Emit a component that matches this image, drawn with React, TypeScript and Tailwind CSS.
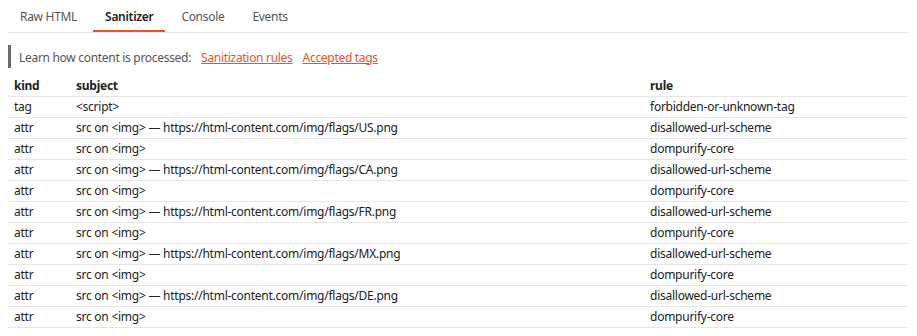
import React from "react";

const rows: [string, string, string][] = [
  ["tag", "<script>", "forbidden-or-unknown-tag"],
  ["attr", "src on <img> — https://html-content.com/img/flags/US.png", "disallowed-url-scheme"],
  ["attr", "src on <img>", "dompurify-core"],
  ["attr", "src on <img> — https://html-content.com/img/flags/CA.png", "disallowed-url-scheme"],
  ["attr", "src on <img>", "dompurify-core"],
  ["attr", "src on <img> — https://html-content.com/img/flags/FR.png", "disallowed-url-scheme"],
  ["attr", "src on <img>", "dompurify-core"],
  ["attr", "src on <img> — https://html-content.com/img/flags/MX.png", "disallowed-url-scheme"],
  ["attr", "src on <img>", "dompurify-core"],
  ["attr", "src on <img> — https://html-content.com/img/flags/DE.png", "disallowed-url-scheme"],
  ["attr", "src on <img>", "dompurify-core"],
];

export default function App() {
  const tabs = ["Raw HTML", "Sanitizer", "Console", "Events"];
  return (
    <div className="w-[917px] h-[336px] bg-white overflow-hidden px-2 text-[12px] text-[#222]" style={{ fontFamily: '"Noto Sans", sans-serif' }}>
      <div className="flex gap-1 border-b border-[#e6e6e6] h-[33px] tracking-[-0.3px]">
        {tabs.map((t, i) => (
          <div
            key={t}
            className={
              "px-3 h-[32px] pt-[3px] flex items-center border-b-2 " +
              (i === 1 ? "border-[#e8532a] text-[#222] font-semibold" : "border-transparent text-[#555]")
            }
          >
            {t}
          </div>
        ))}
      </div>
      <div className="mt-3 h-[23px] border-l-[3px] border-[#6b6b6b] flex items-center pl-2 pt-[2px] text-[#555] tracking-[-0.3px]">
        <span>Learn how content is processed:</span>
        <a className="ml-2.5 text-[#e8532a] underline">Sanitization rules</a>
        <a className="ml-2.5 text-[#e8532a] underline">Accepted tags</a>
      </div>
      <table className="mt-2 w-[900px] border-collapse text-[12px] tracking-[-0.25px]">
        <thead>
          <tr className="border-b border-[#e6e6e6] h-[20px]">
            <th className="text-left font-bold px-1.5 w-[62px]">kind</th>
            <th className="text-left font-bold px-1.5 w-[574px]">subject</th>
            <th className="text-left font-bold px-1.5">rule</th>
          </tr>
        </thead>
        <tbody>
          {rows.map((r, i) => (
            <tr key={i} className="border-b border-[#e6e6e6] h-[21px]">
              <td className="px-1.5">{r[0]}</td>
              <td className="px-1.5">{r[1]}</td>
              <td className="px-1.5">{r[2]}</td>
            </tr>
          ))}
        </tbody>
      </table>
    </div>
  );
}
